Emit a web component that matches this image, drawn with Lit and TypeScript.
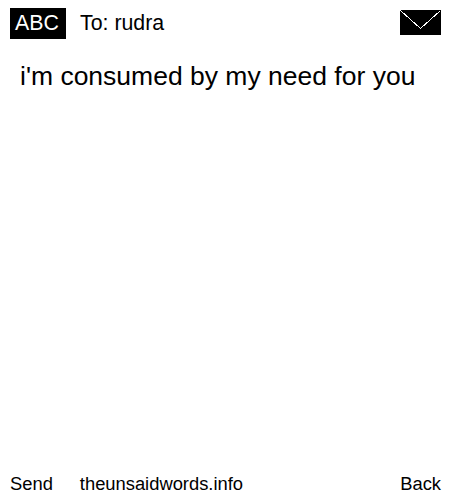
import { LitElement, html, css } from "lit";
import { customElement } from "lit/decorators.js";

@customElement("app-root")
export class AppRoot extends LitElement {
  static styles = css`
    :host {
      display: flex;
      flex-direction: column;
      width: 450px;
      height: 500px;
      background: #fff;
      color: #000;
      font-family: "Liberation Sans", Arial, sans-serif;
      box-sizing: border-box;
    }
    .top {
      display: flex;
      align-items: flex-start;
      padding: 8px 9px 0 10px;
      height: 31px;
      box-sizing: content-box;
    }
    .abc {
      background: #000;
      color: #fff;
      font-size: 21.33px;
      width: 54px;
      padding-right: 2px;
      height: 31px;
      line-height: 31px;
      text-align: center;
    }
    .to {
      margin-left: 14px;
      font-size: 21.33px;
      line-height: 31px;
      flex: 1;
    }
    .mail {
      display: block;
      width: 41px;
      height: 25px;
      margin-top: 2px;
      shape-rendering: crispEdges;
    }
    .msg {
      flex: 1;
      padding: 20px 20px 0;
      font-size: 26.5px;
      line-height: 34px;
    }
    .bottom {
      display: flex;
      padding: 0 9px 5px 10px;
      font-size: 18.35px;
      line-height: 22px;
    }
    .site {
      margin-left: 27px;
      flex: 1;
    }
  `;
  render() {
    return html`
      <div class="top">
        <div class="abc">ABC</div>
        <div class="to">To: rudra</div>
        <svg class="mail" viewBox="0 0 41 25">
          <rect width="41" height="25" fill="#000" />
          <path d="M0.5 0.5 L20.5 18.5 L40.5 0.5" fill="none" stroke="#fff" stroke-width="1" />
        </svg>
      </div>
      <div class="msg">i'm consumed by my need for you</div>
      <div class="bottom">
        <span>Send</span>
        <span class="site">theunsaidwords.info</span>
        <span>Back</span>
      </div>
    `;
  }
}
